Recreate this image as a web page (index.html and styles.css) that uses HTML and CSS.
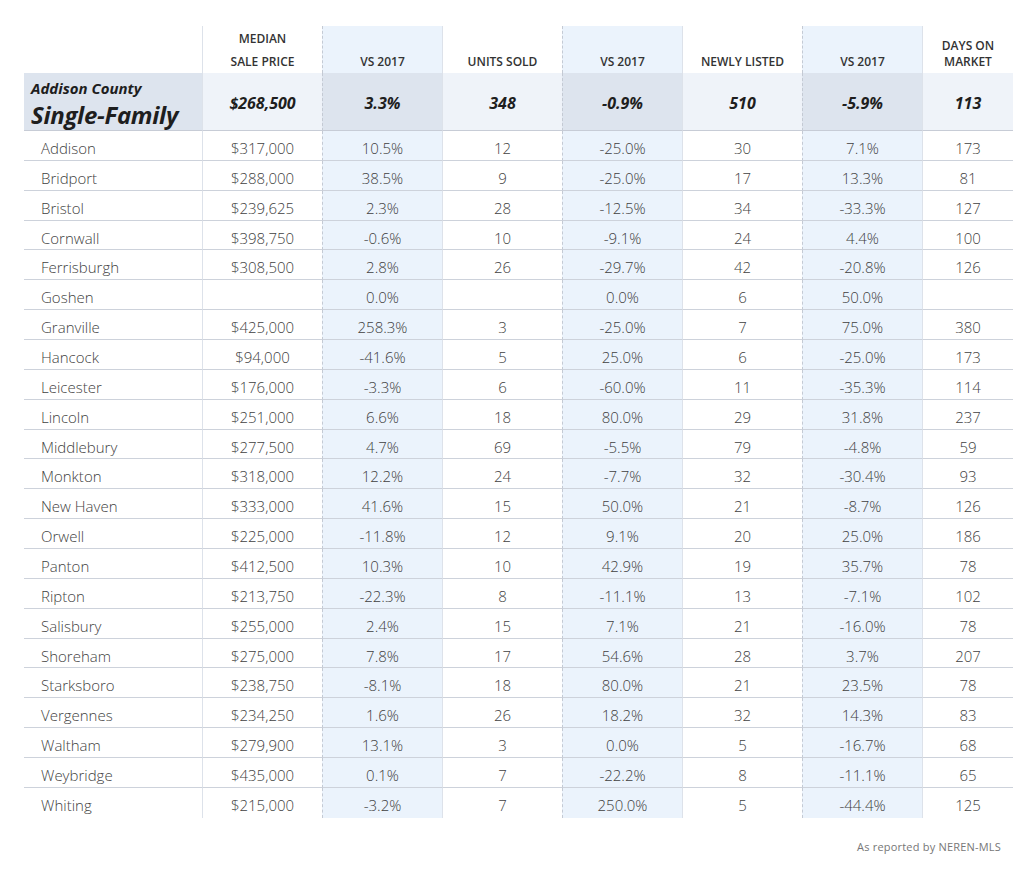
FILE: index.html
```html
<!DOCTYPE html>
<html lang="en">
<head>
<meta charset="utf-8">
<title>Addison County Single-Family</title>
<link rel="stylesheet" href="styles.css">
</head>
<body>
<div class="page">
<table class="report">
<colgroup>
<col class="c-name"><col class="c-num"><col class="c-num"><col class="c-num"><col class="c-num"><col class="c-num"><col class="c-num"><col class="c-last">
</colgroup>
<thead>
<tr class="head">
<th class="name"></th>
<th class="solid tall">MEDIAN<br>SALE PRICE</th>
<th class="dash band">VS 2017</th>
<th class="solid">UNITS SOLD</th>
<th class="dash band">VS 2017</th>
<th class="solid">NEWLY LISTED</th>
<th class="dash band">VS 2017</th>
<th class="solid tight"><span class="hl">DAYS ON</span><span class="hl">MARKET</span></th>
</tr>
</thead>
<tbody>
<tr class="summary">
<td class="name"><span class="county">Addison County</span><span class="kind">Single-Family</span></td>
<td class="solid">$268,500</td>
<td class="dash dark">3.3%</td>
<td class="solid">348</td>
<td class="dash dark">-0.9%</td>
<td class="solid">510</td>
<td class="dash dark">-5.9%</td>
<td class="solid">113</td>
</tr>
<tr><td class="name">Addison</td><td class="solid">$317,000</td><td class="dash band">10.5%</td><td class="solid">12</td><td class="dash band">-25.0%</td><td class="solid">30</td><td class="dash band">7.1%</td><td class="solid">173</td></tr>
<tr><td class="name">Bridport</td><td class="solid">$288,000</td><td class="dash band">38.5%</td><td class="solid">9</td><td class="dash band">-25.0%</td><td class="solid">17</td><td class="dash band">13.3%</td><td class="solid">81</td></tr>
<tr><td class="name">Bristol</td><td class="solid">$239,625</td><td class="dash band">2.3%</td><td class="solid">28</td><td class="dash band">-12.5%</td><td class="solid">34</td><td class="dash band">-33.3%</td><td class="solid">127</td></tr>
<tr><td class="name">Cornwall</td><td class="solid">$398,750</td><td class="dash band">-0.6%</td><td class="solid">10</td><td class="dash band">-9.1%</td><td class="solid">24</td><td class="dash band">4.4%</td><td class="solid">100</td></tr>
<tr><td class="name">Ferrisburgh</td><td class="solid">$308,500</td><td class="dash band">2.8%</td><td class="solid">26</td><td class="dash band">-29.7%</td><td class="solid">42</td><td class="dash band">-20.8%</td><td class="solid">126</td></tr>
<tr><td class="name">Goshen</td><td class="solid"></td><td class="dash band">0.0%</td><td class="solid"></td><td class="dash band">0.0%</td><td class="solid">6</td><td class="dash band">50.0%</td><td class="solid"></td></tr>
<tr><td class="name">Granville</td><td class="solid">$425,000</td><td class="dash band">258.3%</td><td class="solid">3</td><td class="dash band">-25.0%</td><td class="solid">7</td><td class="dash band">75.0%</td><td class="solid">380</td></tr>
<tr><td class="name">Hancock</td><td class="solid">$94,000</td><td class="dash band">-41.6%</td><td class="solid">5</td><td class="dash band">25.0%</td><td class="solid">6</td><td class="dash band">-25.0%</td><td class="solid">173</td></tr>
<tr><td class="name">Leicester</td><td class="solid">$176,000</td><td class="dash band">-3.3%</td><td class="solid">6</td><td class="dash band">-60.0%</td><td class="solid">11</td><td class="dash band">-35.3%</td><td class="solid">114</td></tr>
<tr><td class="name">Lincoln</td><td class="solid">$251,000</td><td class="dash band">6.6%</td><td class="solid">18</td><td class="dash band">80.0%</td><td class="solid">29</td><td class="dash band">31.8%</td><td class="solid">237</td></tr>
<tr><td class="name">Middlebury</td><td class="solid">$277,500</td><td class="dash band">4.7%</td><td class="solid">69</td><td class="dash band">-5.5%</td><td class="solid">79</td><td class="dash band">-4.8%</td><td class="solid">59</td></tr>
<tr><td class="name">Monkton</td><td class="solid">$318,000</td><td class="dash band">12.2%</td><td class="solid">24</td><td class="dash band">-7.7%</td><td class="solid">32</td><td class="dash band">-30.4%</td><td class="solid">93</td></tr>
<tr><td class="name">New Haven</td><td class="solid">$333,000</td><td class="dash band">41.6%</td><td class="solid">15</td><td class="dash band">50.0%</td><td class="solid">21</td><td class="dash band">-8.7%</td><td class="solid">126</td></tr>
<tr><td class="name">Orwell</td><td class="solid">$225,000</td><td class="dash band">-11.8%</td><td class="solid">12</td><td class="dash band">9.1%</td><td class="solid">20</td><td class="dash band">25.0%</td><td class="solid">186</td></tr>
<tr><td class="name">Panton</td><td class="solid">$412,500</td><td class="dash band">10.3%</td><td class="solid">10</td><td class="dash band">42.9%</td><td class="solid">19</td><td class="dash band">35.7%</td><td class="solid">78</td></tr>
<tr><td class="name">Ripton</td><td class="solid">$213,750</td><td class="dash band">-22.3%</td><td class="solid">8</td><td class="dash band">-11.1%</td><td class="solid">13</td><td class="dash band">-7.1%</td><td class="solid">102</td></tr>
<tr><td class="name">Salisbury</td><td class="solid">$255,000</td><td class="dash band">2.4%</td><td class="solid">15</td><td class="dash band">7.1%</td><td class="solid">21</td><td class="dash band">-16.0%</td><td class="solid">78</td></tr>
<tr><td class="name">Shoreham</td><td class="solid">$275,000</td><td class="dash band">7.8%</td><td class="solid">17</td><td class="dash band">54.6%</td><td class="solid">28</td><td class="dash band">3.7%</td><td class="solid">207</td></tr>
<tr><td class="name">Starksboro</td><td class="solid">$238,750</td><td class="dash band">-8.1%</td><td class="solid">18</td><td class="dash band">80.0%</td><td class="solid">21</td><td class="dash band">23.5%</td><td class="solid">78</td></tr>
<tr><td class="name">Vergennes</td><td class="solid">$234,250</td><td class="dash band">1.6%</td><td class="solid">26</td><td class="dash band">18.2%</td><td class="solid">32</td><td class="dash band">14.3%</td><td class="solid">83</td></tr>
<tr><td class="name">Waltham</td><td class="solid">$279,900</td><td class="dash band">13.1%</td><td class="solid">3</td><td class="dash band">0.0%</td><td class="solid">5</td><td class="dash band">-16.7%</td><td class="solid">68</td></tr>
<tr><td class="name">Weybridge</td><td class="solid">$435,000</td><td class="dash band">0.1%</td><td class="solid">7</td><td class="dash band">-22.2%</td><td class="solid">8</td><td class="dash band">-11.1%</td><td class="solid">65</td></tr>
<tr class="last"><td class="name">Whiting</td><td class="solid">$215,000</td><td class="dash band">-3.2%</td><td class="solid">7</td><td class="dash band">250.0%</td><td class="solid">5</td><td class="dash band">-44.4%</td><td class="solid">125</td></tr>
</tbody>
</table>
<p class="source">As reported by NEREN-MLS</p>
</div>
</body>
</html>
```
FILE: styles.css
```css
html, body {
  margin: 0;
  padding: 0;
  background: #ffffff;
}

body {
  font-family: "Open Sans", "Noto Sans", "Liberation Sans", sans-serif;
  color: #444444;
}

.page {
  padding: 26px 0 0 24px;
  width: 989px;
}

.report {
  border-collapse: separate;
  border-spacing: 0;
  table-layout: fixed;
  width: 989px;
}

.c-name { width: 178px; }
.c-num { width: 120px; }
.c-last { width: 91px; }

.report th,
.report td {
  padding: 0;
  text-align: center;
  vertical-align: middle;
}

.solid { border-left: 1px solid #dde2ea; }
.dash { border-left: 1px dashed #c4cad4; }
.band { background: #ebf3fc; }

/* header */
.head th {
  height: 47px;
  vertical-align: bottom;
  padding-bottom: 4px;
  box-sizing: border-box;
  font-size: 12px;
  font-weight: 600;
  color: #333333;
  line-height: 14px;
  letter-spacing: 0;
}
.head th.tall { line-height: 23px; padding-bottom: 0; }
.head th.tight { padding-bottom: 3px; }
.hl {
  display: block;
  line-height: 16px;
}

/* summary */
.summary td {
  height: 58px;
  box-sizing: border-box;
  background: #eff3f9;
  font-size: 16px;
  font-weight: 700;
  font-style: italic;
  color: #1e1e1e;
  border-bottom: 1px solid #c7ccd6;
  padding-top: 2px;
}
.summary td.dark,
.summary td.name { background: #dde4ee; }
.summary td.name {
  text-align: left;
  padding-left: 7px;
  padding-top: 0;
  vertical-align: top;
}
.county {
  display: block;
  font-size: 15px;
  line-height: 18px;
  margin-top: 6px;
}
.kind {
  display: block;
  font-size: 24px;
  line-height: 28px;
  margin-top: 4px;
  letter-spacing: -0.3px;
}

/* data rows */
tbody tr:not(.summary) td {
  height: 29.86px;
  box-sizing: border-box;
  font-size: 15px;
  font-weight: 300;
  color: #3f3f3f;
  border-bottom: 1px solid #cdd2db;
  padding-top: 5px;
}
tbody tr.last td { border-bottom: none; }
tbody tr:not(.summary) td.name {
  text-align: left;
  padding-left: 17px;
}

.source {
  margin: 21px 0 0;
  text-align: right;
  padding-right: 12px;
  font-size: 11px;
  color: #777777;
  letter-spacing: 0.2px;
}
```
